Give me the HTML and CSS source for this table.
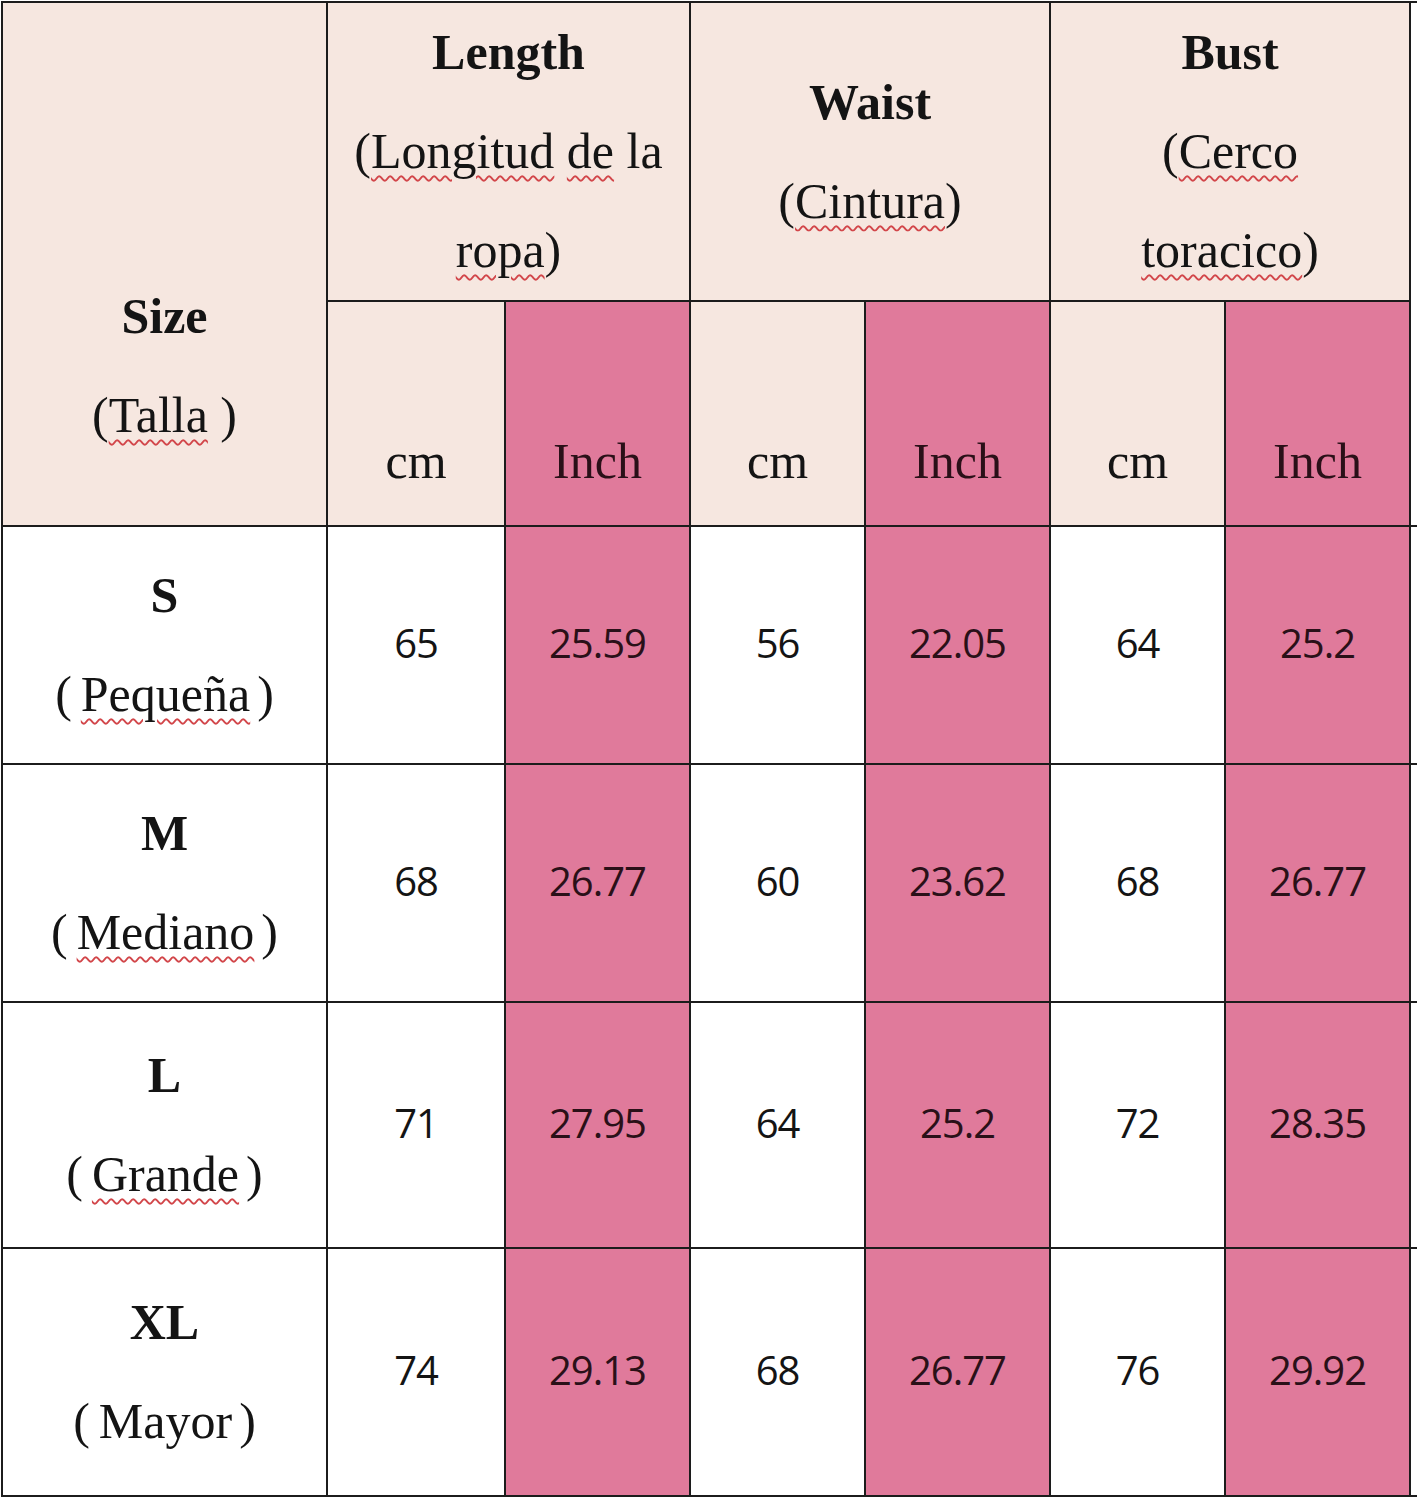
FILE: index.html
```html
<!DOCTYPE html>
<html>
<head>
<meta charset="utf-8">
<link rel="stylesheet" href="styles.css">
</head>
<body>
<div class="wrap">
<table class="chart">
  <colgroup>
    <col class="c-size">
    <col class="c-a"><col class="c-b">
    <col class="c-c"><col class="c-b">
    <col class="c-d"><col class="c-b">
    <col class="c-x">
  </colgroup>
  <tr class="h1">
    <td class="hd size" rowspan="2"><b>Size</b><br>(<span class="sp">Talla</span> )</td>
    <td class="hd grp" colspan="2"><b>Length</b><br>(<span class="sp">Longitud</span> <span class="sp">de</span> la<br><span class="sp">ropa</span>)</td>
    <td class="hd grp" colspan="2"><b>Waist</b><br>(<span class="sp">Cintura</span>)</td>
    <td class="hd grp" colspan="2"><b>Bust</b><br>(<span class="sp">Cerco</span><br><span class="sp">toracico</span>)</td>
    <td class="extra" rowspan="2"></td>
  </tr>
  <tr class="h2">
    <td class="hd unit">cm</td><td class="unit inch">Inch</td>
    <td class="hd unit">cm</td><td class="unit inch">Inch</td>
    <td class="hd unit">cm</td><td class="unit inch">Inch</td>
  </tr>
  <tr class="r1">
    <td class="lab"><b>S</b><br><span class="lp">(</span><span class="sp">Pequeña</span><span class="rp">)</span></td>
    <td class="num">65</td><td class="num pk">25.59</td>
    <td class="num">56</td><td class="num pk">22.05</td>
    <td class="num">64</td><td class="num pk">25.2</td>
    <td class="extra"></td>
  </tr>
  <tr class="r2">
    <td class="lab"><b>M</b><br><span class="lp">(</span><span class="sp">Mediano</span><span class="rp">)</span></td>
    <td class="num">68</td><td class="num pk">26.77</td>
    <td class="num">60</td><td class="num pk">23.62</td>
    <td class="num">68</td><td class="num pk">26.77</td>
    <td class="extra"></td>
  </tr>
  <tr class="r3">
    <td class="lab"><b>L</b><br><span class="lp">(</span><span class="sp">Grande</span><span class="rp">)</span></td>
    <td class="num">71</td><td class="num pk">27.95</td>
    <td class="num">64</td><td class="num pk">25.2</td>
    <td class="num">72</td><td class="num pk">28.35</td>
    <td class="extra"></td>
  </tr>
  <tr class="r4">
    <td class="lab"><b>XL</b><br><span class="lp">(</span>Mayor<span class="rp">)</span></td>
    <td class="num">74</td><td class="num pk">29.13</td>
    <td class="num">68</td><td class="num pk">26.77</td>
    <td class="num">76</td><td class="num pk">29.92</td>
    <td class="extra"></td>
  </tr>
</table>
</div>
</body>
</html>
```

FILE: styles.css
```css
html, body {
  margin: 0;
  padding: 0;
  background: #ffffff;
}
.wrap {
  width: 1417px;
  height: 1500px;
  overflow: hidden;
  padding: 1px 0 0 1px;
  box-sizing: border-box;
}
.chart {
  border-collapse: collapse;
  table-layout: fixed;
  width: 1449px;
  font-family: "Liberation Serif", "Noto Sans CJK SC", serif;
  font-size: 50px;
  color: #141414;
}
.c-size { width: 325px; }
.c-a { width: 178px; }
.c-b { width: 185px; }
.c-c { width: 175px; }
.c-d { width: 175px; }
.c-x { width: 40px; }
.chart td {
  border: 2px solid #1c1c1c;
  padding: 0;
  text-align: center;
  line-height: 99px;
  overflow: hidden;
  white-space: nowrap;
}
.chart td.extra {
  border-right: none;
  background: #ffffff;
}
.h1 .extra { background: #fbf3ef; }
.h1 { height: 296px; }
.h2 { height: 225px; }
.r1 { height: 238px; }
.r2 { height: 238px; }
.r3 { height: 246px; }
.r4 { height: 248px; }
.hd { background: #f6e7e0; }
.grp { vertical-align: middle; }
.size {
  vertical-align: bottom;
  padding-bottom: 60px !important;
}
.unit {
  vertical-align: bottom;
  padding-bottom: 14px !important;
}
.inch { background: #e07a9b; color: #2a1018; }
.lab { background: #ffffff; vertical-align: middle; }
.lp { margin-right: 9px; }
.rp { margin-left: 7px; }
.num {
  font-family: "Open Sans", "Liberation Sans", sans-serif;
  font-size: 40px;
  letter-spacing: -1px;
  vertical-align: middle;
  background: #ffffff;
  padding-bottom: 6px !important;
}
.num.pk { background: #e07a9b; color: #2a1018; }
.sp {
  text-decoration-line: underline;
  text-decoration-style: wavy;
  text-decoration-color: #d2464a;
  text-decoration-thickness: 1.5px;
  text-underline-offset: 7px;
}
b { font-weight: bold; }
```
